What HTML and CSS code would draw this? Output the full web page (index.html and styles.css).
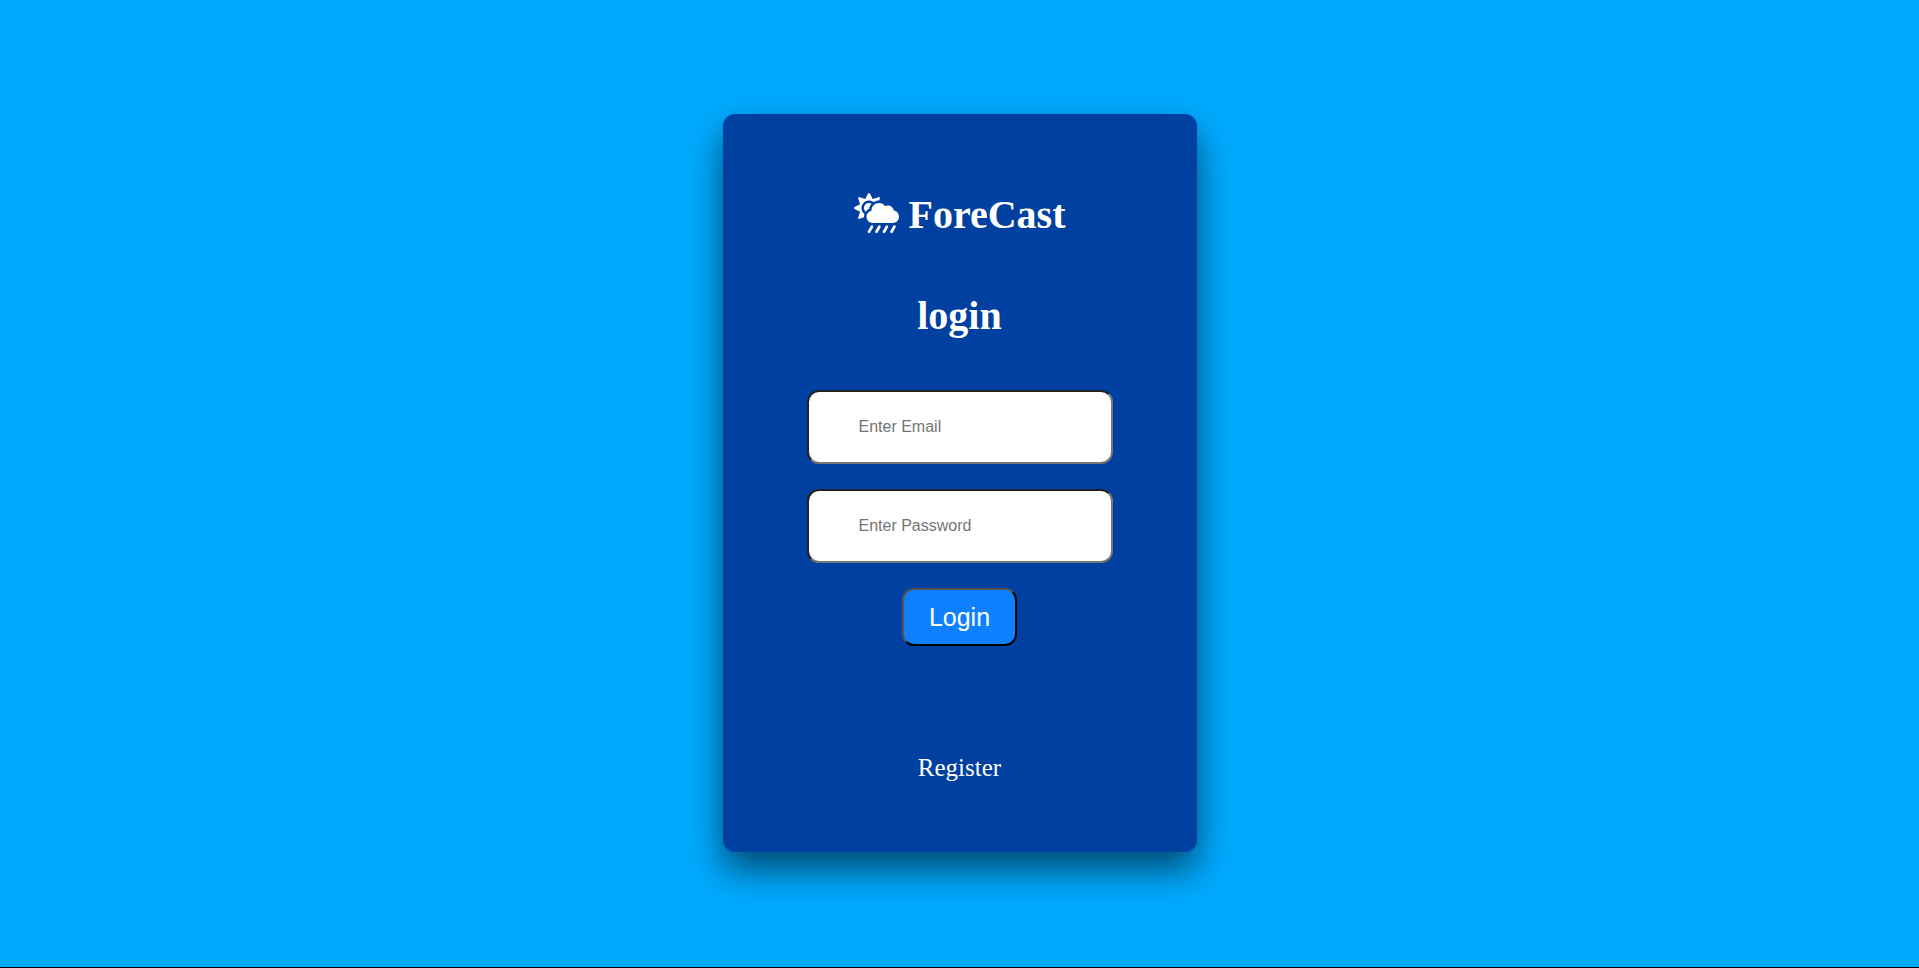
FILE: index.html
```html
<!DOCTYPE html>
<html lang="en">
<head>
  <meta charset="utf-8">
  <title>ForeCast</title>
  <link rel="stylesheet" href="styles.css">
</head>
<body>
  <main class="page">
    <section class="card">
      <h1 class="title">
        <svg class="title-icon" viewBox="0 0 576 512" aria-hidden="true"><path fill="currentColor" d="M510.500 225.500c-6.900-37.200-39.300-65.500-78.500-65.500-12.300 0-23.900 3-34.300 8-17.400-24.100-45.600-40-77.700-40-53 0-96 43-96 96 0 .5.2 1.100.2 1.600C187.600 233 160 265.200 160 304c0 44.200 35.800 80 80 80h256c44.200 0 80-35.800 80-80 0-39.200-28.200-71.700-65.500-78.500zM124.100 259.900c-37.400-37.400-37.400-98.300 0-135.800 34.600-34.600 89.100-36.800 126.700-7.400 20-12.900 43.600-20.700 69.200-20.700.7 0 1.300.2 2 .2l8.900-26.700c3.400-10.200-6.300-19.800-16.500-16.400l-75.300 25.100-35.500-71c-4.800-9.600-18.500-9.600-23.300 0l-35.500 71-75.300-25.100c-10.200-3.400-19.800 6.300-16.400 16.500l25.100 75.300-71 35.500c-9.600 4.800-9.600 18.500 0 23.300l71 35.500-25.100 75.300c-3.400 10.200 6.300 19.800 16.500 16.500l59.200-19.700c-.2-2.400-.7-4.700-.7-7.200 0-12.500 2.300-24.500 6.200-35.900-3.600-2.700-7.100-5.200-10.200-8.300zM193.900 201.900c4.300-24.500 15.800-46.400 31.900-64-9.800-6.200-21.400-9.900-33.800-9.900-35.300 0-64 28.700-64 64 0 18.700 8.200 35.400 21.100 47.100 11.300-15.900 26.600-28.900 44.800-37.200z"/><path fill="none" stroke="currentColor" stroke-width="34" stroke-linecap="round" d="M516.600 432l-36.600 64M420.600 432l-36.600 64M324.600 432l-36.600 64M228.600 432l-36.600 64"/></svg>
        ForeCast
      </h1>
      <h2 class="subtitle">login</h2>
      <form class="form">
        <input class="field" type="email" placeholder="Enter Email" aria-label="Email">
        <input class="field" type="password" placeholder="Enter Password" aria-label="Password">
        <button class="submit" type="submit">Login</button>
      </form>
      <a class="register" href="#register">Register</a>
    </section>
  </main>
</body>
</html>
```
FILE: styles.css
```css
* {
  box-sizing: border-box;
}

body {
  margin: 0;
  font-family: "Liberation Serif", "Times New Roman", serif;
  color: #fff;
}

.page {
  display: flex;
  align-items: center;
  justify-content: center;
  min-height: 100vh;
  padding-bottom: 1px;
  background: #00aaff;
  border-bottom: 1px solid #000;
}

.card {
  display: flex;
  flex-direction: column;
  align-items: center;
  padding: 78px 84px 70px;
  background: #0040a0;
  border-radius: 12px;
  box-shadow: 0 18px 36px rgba(0, 0, 0, 0.56);
}

.title,
.subtitle {
  margin: 0;
  font-size: 40px;
  line-height: 46px;
}

.title-icon {
  width: 45px;
  height: 40px;
  vertical-align: -5px;
}

.subtitle {
  margin-top: 55px;
}

.form {
  display: flex;
  flex-direction: column;
  align-items: center;
  gap: 25px;
  margin-top: 51px;
}

.field {
  width: 306px;
  padding: 26px 50px;
  border-width: 2px;
  border-radius: 12px;
  font: 16px/18px "Liberation Sans", Arial, sans-serif;
}

.submit {
  padding: 13px 25px;
  border: 2px outset #000;
  border-radius: 12px;
  background: #0f80ff;
  color: #fff;
  font: 25px/28px "Liberation Sans", Arial, sans-serif;
}

.register {
  margin-top: 108px;
  color: #fff;
  font-size: 25px;
  line-height: 28px;
  text-decoration: none;
}
```
